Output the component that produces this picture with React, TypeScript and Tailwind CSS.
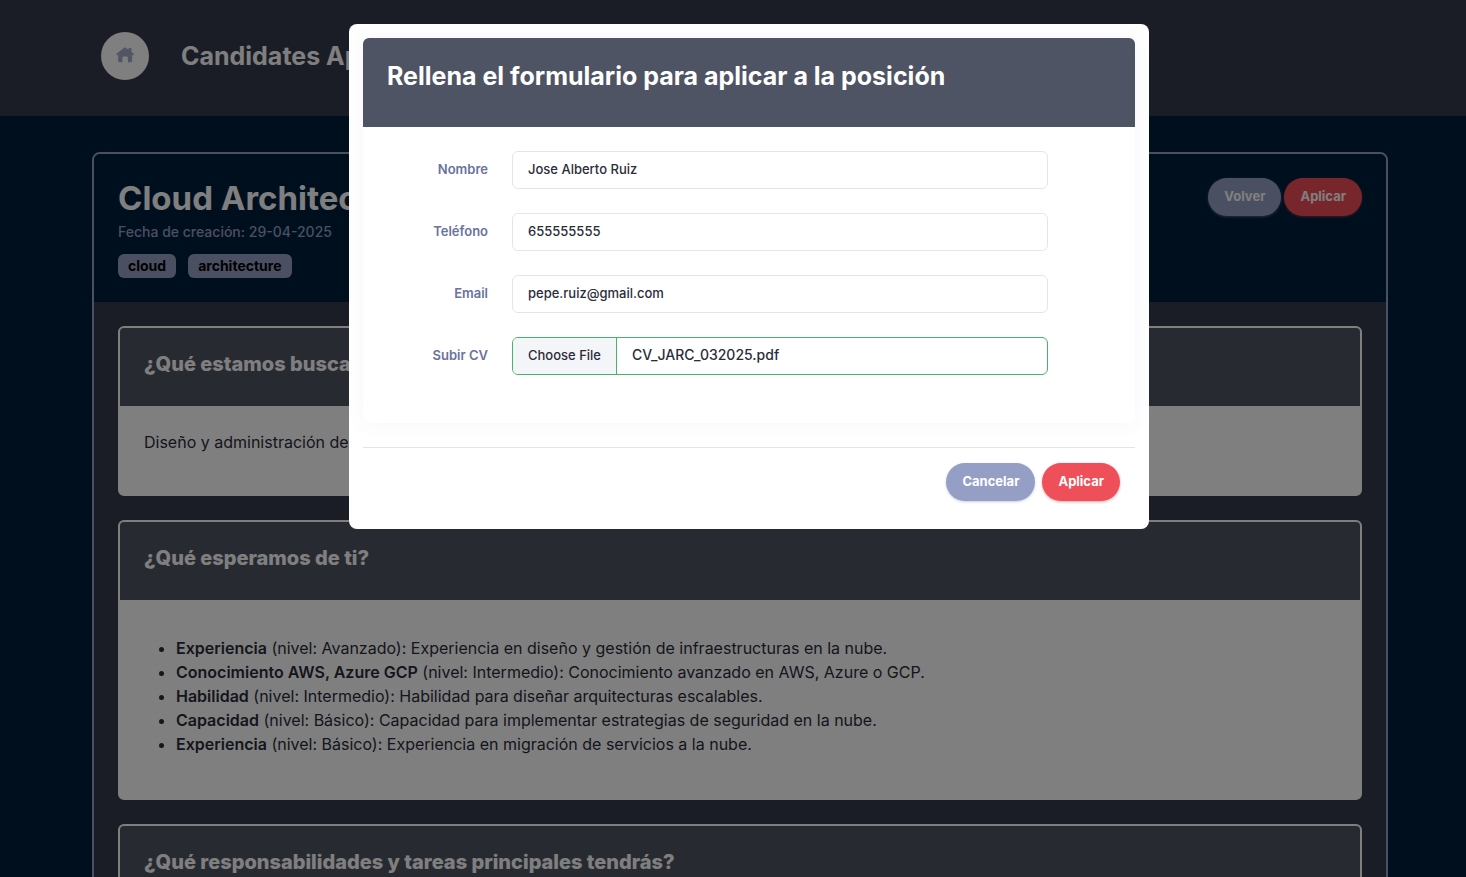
import { useRef, useState } from "react";
import type { ReactNode } from "react";

const requirements = [
  { name: "Experiencia", text: "(nivel: Avanzado): Experiencia en diseño y gestión de infraestructuras en la nube." },
  { name: "Conocimiento AWS, Azure GCP", text: "(nivel: Intermedio): Conocimiento avanzado en AWS, Azure o GCP." },
  { name: "Habilidad", text: "(nivel: Intermedio): Habilidad para diseñar arquitecturas escalables." },
  { name: "Capacidad", text: "(nivel: Básico): Capacidad para implementar estrategias de seguridad en la nube." },
  { name: "Experiencia", text: "(nivel: Básico): Experiencia en migración de servicios a la nube." },
];

const fields = [
  { id: "nombre", label: "Nombre", type: "text", value: "Jose Alberto Ruiz" },
  { id: "telefono", label: "Teléfono", type: "tel", value: "655555555" },
  { id: "email", label: "Email", type: "email", value: "pepe.ruiz@gmail.com" },
];

function HomeIcon() {
  return (
    <svg viewBox="0 0 18 16" className="mb-0.5 h-4 w-[18px] fill-[#a4abc6]" aria-hidden="true">
      <path d="M8.2.7a1.300 1.300 0 0 1 1.600 0l2.700 2V1.800c0-.4.3-.7.7-.7h1.600c.4 0 .7.3.7.7v3.300l1.900 1.500c.8.7.4 1.700-.5 1.700h-.8v5.700c0 .8-.5 1.300-1.300 1.300h-2.900v-4.300c0-1-.6-1.600-1.500-1.600H7.900c-.9 0-1.500.6-1.500 1.600v4.300H3.500c-.8 0-1.300-.5-1.300-1.300V8.300h-.9C.4 8.300.1 7.200.8 6.600z" />
    </svg>
  );
}

function PillButton({ tone, children }: { tone: "muted" | "danger"; children: ReactNode }) {
  const color = tone === "muted" ? "bg-[#959fc5] shadow-[#959fc5]/40" : "bg-[#ee4f59] shadow-[#ee4f59]/40";
  return (
    <button type="button" className={`h-[38px] rounded-full px-4 pb-0.5 text-[13px] leading-5 font-bold text-white shadow-sm ${color}`}>
      {children}
    </button>
  );
}

function Section({ title, children }: { title: string; children: ReactNode }) {
  return (
    <section className="overflow-hidden rounded-md border-2 border-white bg-white">
      <div className="h-[78px] bg-[#505462] px-6 pt-6">
        <h2 className="text-xl leading-6 font-extrabold text-white">{title}</h2>
      </div>
      {children}
    </section>
  );
}

function ApplyDialog() {
  const [values, setValues] = useState<Record<string, string>>({
    nombre: fields[0].value,
    telefono: fields[1].value,
    email: fields[2].value,
  });
  const [fileName, setFileName] = useState("CV_JARC_032025.pdf");
  const fileRef = useRef<HTMLInputElement>(null);

  return (
    <div
      role="dialog"
      aria-modal="true"
      aria-labelledby="dialog-title"
      className="w-full max-w-[800px] rounded-lg bg-white p-3.5"
    >
      <form>
        <div className="overflow-hidden rounded-md shadow-[0_0_20px_rgba(90,100,180,0.06)]">
          <div className="h-[89px] bg-[#4f5464] px-6 pt-6">
            <h2 id="dialog-title" className="text-[25px] leading-7 font-bold text-white">
              Rellena el formulario para aplicar a la posición
            </h2>
          </div>
          <div className="flex flex-col gap-6 pt-6 pr-[87px] pb-12">
            {fields.map((f) => (
              <div key={f.id} className="grid grid-cols-[125px_1fr] items-center gap-6">
                <label htmlFor={f.id} className="text-right text-[13px] font-semibold text-[#6a729d]">
                  {f.label}
                </label>
                <input
                  id={f.id}
                  type={f.type}
                  value={values[f.id]}
                  onChange={(e) => setValues({ ...values, [f.id]: e.target.value })}
                  className="h-[38px] min-w-0 rounded-md border border-[#e2e5ec] px-[15px] pb-0.5 text-[13px] font-medium text-[#2b2c3a] outline-none"
                />
              </div>
            ))}
            <div className="grid grid-cols-[125px_1fr] items-center gap-6">
              <label htmlFor="cv" className="text-right text-[13px] font-semibold text-[#6a729d]">
                Subir CV
              </label>
              <div className="flex h-[38px] min-w-0 overflow-hidden rounded-md border border-[#45b369] text-[13px] font-medium text-[#2b2c3a]">
                <input
                  id="cv"
                  ref={fileRef}
                  type="file"
                  className="sr-only"
                  onChange={(e) => setFileName(e.target.files?.[0]?.name ?? "")}
                />
                <button
                  type="button"
                  onClick={() => fileRef.current?.click()}
                  className="border-r border-[#45b369] bg-[#f4f5f9] px-[15px]"
                >
                  Choose File
                </button>
                <span className="truncate px-[15px] text-sm leading-[34px]">{fileName}</span>
              </div>
            </div>
          </div>
        </div>
        <div className="mt-6 flex justify-end gap-[7px] border-t border-[#e2e4ec] px-[15px] pt-[15px] pb-3.5">
          <PillButton tone="muted">Cancelar</PillButton>
          <PillButton tone="danger">Aplicar</PillButton>
        </div>
      </form>
    </div>
  );
}

export default function App() {
  return (
    <div className="h-screen overflow-hidden bg-[#001e3c] font-[Inter,sans-serif] text-[#2b2c3a]">
      <header className="flex items-start gap-8 bg-[#373a4c] pt-8 pr-[78px] pb-9 pl-[101px]">
        <a href="#inicio" aria-label="Inicio" className="flex size-12 items-center justify-center rounded-full bg-white">
          <HomeIcon />
        </a>
        <h1 className="text-[25px] leading-12 font-bold text-white">Candidates App</h1>
      </header>

      <main className="pt-9 pr-[78px] pl-[92px]">
        <article className="overflow-hidden rounded-lg border-2 border-[#959fc5] bg-[#373a4c]">
          <div className="flex items-start justify-between bg-[#001e3c] p-6">
            <div>
              <h2 className="text-[33px] leading-10 font-bold text-white">Cloud Architect</h2>
              <p className="mt-1 text-sm leading-5 font-medium text-[#959fc5]">Fecha de creación: 29-04-2025</p>
              <ul className="mt-3 flex gap-3">
                <li className="rounded-md bg-[#959fc5] px-2.5 text-sm leading-6 font-bold text-black">cloud</li>
                <li className="rounded-md bg-[#959fc5] px-2.5 text-sm leading-6 font-bold text-black">architecture</li>
              </ul>
            </div>
            <div className="flex gap-[3px]">
              <PillButton tone="muted">Volver</PillButton>
              <PillButton tone="danger">Aplicar</PillButton>
            </div>
          </div>
          <div className="flex flex-col gap-6 p-6">
            <Section title="¿Qué estamos buscando?">
              <p className="px-6 pt-6 pb-10 leading-6">Diseño y administración de infraestructuras en la nube.</p>
            </Section>
            <Section title="¿Qué esperamos de ti?">
              <ul className="list-disc pt-9 pr-6 pb-[42px] pl-14 leading-6">
                {requirements.map((r, i) => (
                  <li key={i}>
                    <strong className="font-semibold">{r.name}</strong> {r.text}
                  </li>
                ))}
              </ul>
            </Section>
            <Section title="¿Qué responsabilidades y tareas principales tendrás?">
              <p className="px-6 pt-6 pb-10 leading-6">Diseñar y mantener arquitecturas en la nube.</p>
            </Section>
          </div>
        </article>
      </main>

      <div className="fixed inset-0 flex items-start justify-center bg-black/50 pt-6 pl-8">
        <ApplyDialog />
      </div>
    </div>
  );
}
